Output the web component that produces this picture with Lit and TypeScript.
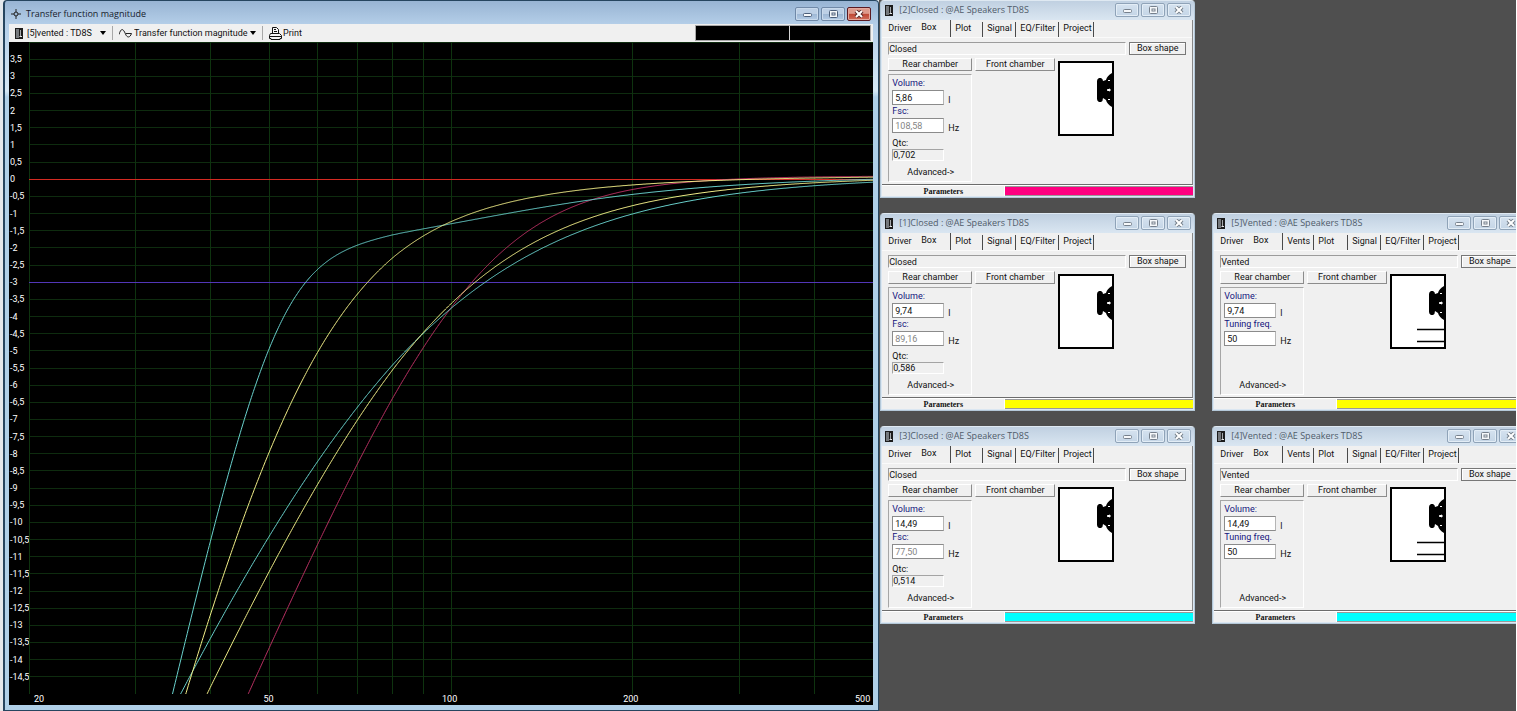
import { LitElement, html, svg, css, nothing } from "lit";
import { customElement, property } from "lit/decorators.js";

const UI = css`
  :host { box-sizing: border-box; font: 9px/12px Roboto, "Liberation Sans", sans-serif; color: #111; }
  *, *::before, *::after { box-sizing: border-box; }
  button, input, select, output { font: inherit; color: inherit; margin: 0; padding: 0; border-radius: 0; }
`;

const F_MIN = 20, F_MAX = 500, DB_MAX = 4, DB_MIN = -15;
const W = 843, H = 652;
const FS = 46.3, QTS = 0.307, VAS = 25.5, QL = 11.5;

const px = (f: number) => (Math.log(f / F_MIN) / Math.log(F_MAX / F_MIN)) * W;
const py = (db: number) => ((DB_MAX - db) / (DB_MAX - DB_MIN)) * H;
const lift = (f: number) => 0.1 * Math.min(1, (f / 80) ** 2);

function closedBox(f: number, fc: number, q: number) {
  const r2 = (f / fc) ** 2;
  return 10 * Math.log10((r2 * r2) / ((1 - r2) ** 2 + r2 / (q * q))) + lift(f);
}

function ventedBox(f: number, volume: number, tuning: number) {
  const h = tuning / FS, x = f / FS, alpha = VAS / volume;
  const re = x ** 4 - (1 + alpha + h * h + h / (QL * QTS)) * x * x + h * h;
  const im = -(x ** 3) * (1 / QTS + h / QL) + x * ((h * h) / QTS + h / QL);
  return 10 * Math.log10(x ** 8 / (re * re + im * im)) + lift(f);
}

function trace(fn: (f: number) => number) {
  const pts: string[] = [];
  for (let x = 0; x <= W; x += 1) {
    const db = fn(F_MIN * Math.pow(F_MAX / F_MIN, x / W));
    if (db >= DB_MIN - 0.1) pts.push(`${x},${py(db).toFixed(1)}`);
  }
  return pts.join(" ");
}

const CURVES = [
  { color: "#b83062", points: trace((f) => closedBox(f, 108.58, 0.702)) },
  { color: "#6ad2ce", points: trace((f) => closedBox(f, 77.5, 0.514)) },
  { color: "#f2ee88", points: trace((f) => closedBox(f, 89.16, 0.586)) },
  { color: "#6ad2ce", points: trace((f) => ventedBox(f, 14.49, 50)) },
  { color: "#f2ee88", points: trace((f) => ventedBox(f, 9.74, 50)) },
];

const speakerIcon = html`<svg width="8" height="11" viewBox="0 0 8 11" aria-hidden="true">
  <rect width="8" height="11" fill="#1c1c1c" /><rect x="1" y="1" width="3" height="9" fill="#74787c" />
  <path d="M5.500 2v6" stroke="#a4a8ab" /><path d="M4.500 8.500h2.500" stroke="#e4e6e8" />
</svg>`;

const caret = html`<svg width="6" height="4" viewBox="0 0 6 4" aria-hidden="true"><path d="M0 0h6L3 4z" fill="#000" /></svg>`;

@customElement("caption-buttons")
class CaptionButtons extends LitElement {
  @property({ type: Boolean }) active = false;
  static styles = [UI, css`
    :host { display: flex; gap: 2px; }
    button { width: 24px; height: 14px; border: 1px solid #8fa3b8; border-radius: 2px; box-shadow: inset 0 0 0 1px #e3edf6; display: grid; place-items: center;
      background: linear-gradient(#d5e2ef, #c4d5e6); }
    .blue { background: linear-gradient(#bdd0e6 50%, #9db7d4 50%, #b4cce6); border-color: #7089a8; box-shadow: inset 0 0 0 1px #c9daec; }
    .close { background: linear-gradient(#dd9a8c 45%, #bf4633 50%, #cf6e5c); border-color: #5b1a22; box-shadow: inset 0 0 0 1px #e5a99e; }
  `];
  render() {
    const a = this.active ? "blue" : "";
    const ink = this.active ? "#4c5f7a" : "#76808c";
    return html`
      <button class=${a} aria-label="Minimize"><svg width="9" height="8" viewBox="0 0 9 8"><rect x=".5" y="3.500" width="8" height="3" rx="1" fill="#f6f8fa" stroke=${ink} /></svg></button>
      <button class=${a} aria-label="Maximize"><svg width="9" height="8" viewBox="0 0 9 8"><rect x=".5" y=".5" width="8" height="7" rx="1" fill="#f6f8fa" stroke=${ink} /><rect x="3" y="3" width="3" height="2" fill="#fff" stroke=${ink} /></svg></button>
      <button class=${this.active ? "close" : ""} aria-label="Close"><svg width="10" height="8" viewBox="0 0 10 8"><path d="M2 1l6 6M8 1l-6 6" stroke=${this.active ? "#5b2a2a" : ink} stroke-width="4" /><path d="M2 1l6 6M8 1l-6 6" stroke="#fff" stroke-width="2" /></svg></button>`;
  }
}

@customElement("response-chart")
class ResponseChart extends LitElement {
  static styles = [UI, css`
    :host { flex: 1; min-height: 0; display: grid; grid-template: minmax(0, 1fr) 11px / 20px minmax(0, 1fr); background: #000; color: #fff; }
    .levels { display: flex; flex-direction: column; padding-left: 1px; }
    .levels span { flex: 1 1 0; min-height: 0; display: flex; align-items: center; white-space: nowrap; }
    .levels i { flex: .5 1 0; }
    svg { display: block; width: 100%; height: 100%; }
    polyline, line { fill: none; vector-effect: non-scaling-stroke; }
    line { shape-rendering: crispEdges; }
    .freqs { grid-column: 2; display: flex; line-height: 11px; }
    .freqs span { width: 0; display: flex; justify-content: center; }
    .freqs .first { justify-content: flex-start; text-indent: 5px; }
    .freqs .last { justify-content: flex-end; padding-right: 3px; }
  `];
  render() {
    const levels = Array.from({ length: 37 }, (_, i) => 3.5 - i * 0.5);
    const rows = Array.from({ length: 39 }, (_, i) => 4 - i * 0.5).filter((v) => v !== 0 && v !== -3);
    const cols = [20, 30, 40, 50, 60, 70, 80, 90, 100, 200, 300, 400, 500];
    const marks = [20, 50, 100, 200, 500];
    return html`
      <div class="levels"><i></i>${levels.map((v) => html`<span>${String(v).replace(".", ",")}</span>`)}<i></i></div>
      <svg viewBox="0 0 ${W} ${H}" preserveAspectRatio="none" role="img" aria-label="Transfer function magnitude">
        ${rows.map((v) => svg`<line x1="0" x2=${W} y1=${py(v)} y2=${py(v)} stroke="#0e2c0f" />`)}
        ${cols.map((f) => svg`<line y1="0" y2=${H} x1=${px(f)} x2=${px(f)} stroke="#0e330f" />`)}
        <line x1="0" x2=${W} y1=${py(0)} y2=${py(0)} stroke="#d42a22" />
        <line x1="0" x2=${W} y1=${py(-3)} y2=${py(-3)} stroke="#5236b8" />
        ${CURVES.map((c) => svg`<polyline points=${c.points} stroke=${c.color} />`)}
      </svg>
      <div class="freqs">${marks.map((f, i) => html`
        ${i ? html`<i style="flex-grow:${Math.log(f / marks[i - 1])}"></i>` : nothing}
        <span class=${i === 0 ? "first" : i === marks.length - 1 ? "last" : ""}>${f}</span>`)}</div>`;
  }
}

@customElement("chart-window")
class ChartWindow extends LitElement {
  static styles = [UI, css`
    :host { display: flex; flex-direction: column; border: 1px solid #26455f; border-left: 2px solid #26455f; border-radius: 4px 4px 0 0; padding: 1px 5px 5px 4px;
      background: linear-gradient(#98b4d3, #b5cfe9 24px, #d6e8f5 90px, #b0d0e8 96px); }
    .title { height: 22px; display: flex; align-items: center; gap: 5px; padding: 2px 2px 0 2px; font: 9px/12px "Open Sans", "Noto Sans", sans-serif; color: #16202c; }
    .title span { flex: 1; }
    .bar { height: 18px; display: flex; align-items: center; background: #f0f0f0; padding: 0 2px 0 6px; }
    .bar label { display: flex; align-items: center; gap: 2px; }
    .bar select { appearance: none; border: 0; background: none; height: 14px; }
    .source { width: 73px; padding-left: 2px; }
    .graph { width: 114px; }
    .sep { width: 1px; height: 14px; background: #a8a8a8; margin: 0 6px; }
    .print { border: 0; background: none; display: flex; align-items: center; gap: 1px; }
    .readouts { margin-left: auto; display: flex; gap: 1px; height: 16px; background: #d4d4d4; border: 1px solid #aaa; }
    .readouts output { background: #000; width: 93px; }
    .readouts output + output { width: 80px; }
  `];
  render() {
    return html`
      <div class="title">
        <svg width="10" height="10" viewBox="0 0 10 10" aria-hidden="true"><path d="M5 0v10M0 5h10" stroke="#222" /><circle cx="5" cy="5" r="2" fill="#9db8d4" stroke="#222" /></svg>
        <span>Transfer function magnitude</span><caption-buttons active></caption-buttons>
      </div>
      <div class="bar">
        <label>${speakerIcon}<select class="source" aria-label="Project"><option>[5]vented : TD8S</option></select>${caret}</label>
        <span class="sep"></span>
        <label><svg width="13" height="9" viewBox="0 0 13 9" aria-hidden="true"><path d="M0 5.500C2 -1 4 -1 6.500 5C8 9 11 9 12.500 4.500H7" fill="none" stroke="#222" /></svg>
          <select class="graph" aria-label="Graph"><option>Transfer function magnitude</option></select>${caret}</label>
        <span class="sep"></span>
        <button class="print"><svg width="13" height="13" viewBox="0 0 13 13" aria-hidden="true"><path d="M3.500 6.500v-6h4l2 2v4M1.500 6.500h9l2 2v3h-1.500v1h-9v-1h-1.500v-3zM0.500 9.500h12M5 2.500h2M5 4.500h3" fill="#f4f4f4" stroke="#111" /></svg>Print</button>
        <div class="readouts"><output></output><output></output></div>
      </div>
      <response-chart></response-chart>`;
  }
}

interface Project {
  id: number; type: "Closed" | "Vented"; volume: string; color: string;
  fsc?: string; qtc?: string; tuning?: string; col: number; row: number;
}

@customElement("box-window")
class BoxWindow extends LitElement {
  @property({ attribute: false }) project!: Project;
  static styles = [UI, css`
    :host { display: flex; flex-direction: column; height: 198px; border-radius: 4px 4px 0 0; padding: 0 1px 1px; background: linear-gradient(#c0d0e1, #dbe7f2 20px); border: 1px solid #b4c8d8; border-top-color: #dfe9f2; }
    .title { height: 19px; display: flex; align-items: center; gap: 6px; padding: 0 2px 1px 3px; font: 9px/12px "Open Sans", "Noto Sans", sans-serif; color: #505c6a; }
    .title span { flex: 1; white-space: nowrap; }
    .page { flex: 1; background: #f0f0f0; border-bottom: 1px solid #6c6c6c; border-right: 1px solid #888; }
    .tabs { display: flex; height: 17px; align-items: flex-end; }
    .tabs button { height: 15px; border: 0; border-right: 1px solid #4a4a4a; background: none; text-align: left; padding: 0 0 3px 4px; white-space: nowrap; }
    .tabs .driver { width: 34px; border: 0; padding-left: 6px; }
    .tabs .box { width: 35px; height: 17px; padding: 0 0 4px 5px; }
    .tabs .vents { width: 31px; } .tabs .plot { width: 32px; } .tabs .vents + .plot { width: 34px; } .tabs .signal { width: 33px; } .tabs .eq { width: 43px; } .tabs .project { width: 35px; }
    .body { padding: 4px 6px 0 6px; border-top: 1px solid #fafafa; display: flex; flex-direction: column; gap: 3px; }
    .top { display: flex; gap: 3px; }
    .kind { flex: 1; height: 13px; line-height: 12px; border: 1px solid; border-color: #9c9c9c #fff #fff #9c9c9c; }
    .btn { height: 13px; border: 1px solid; border-color: #fff #8c8c8c #8c8c8c #fff; background: #f0f0f0; line-height: 11px; }
    .shape { width: 57px; border: 1px solid #777; box-shadow: inset 1px 1px #fff; }
    .main { display: flex; gap: 3px; align-items: flex-start; }
    .rear { width: 84px; display: flex; flex-direction: column; gap: 3px; }
    .front { width: 80px; }
    .params { height: 108px; border: 1px solid; border-color: #a6a6a6 #fff #fff #a6a6a6; display: flex; flex-direction: column; padding: 2px 0 0 3px; }
    .field { display: grid; grid-template-columns: 52px auto; column-gap: 4px; }
    .field label { grid-column: 1 / 3; height: 13px; color: #13137c; line-height: 13px; }
    .field input { height: 15px; border: 1px solid #8b8b8b; border-right-color: #b5b5b5; background: #fff; padding-left: 2px; min-width: 0; width: 100%; }
    .field input:disabled { color: #858585; }
    .field span { line-height: 20px; height: 15px; }
    .result { display: grid; width: 52px; padding-top: 4px; }
    .result output { height: 12px; line-height: 11px; border: 1px solid; border-color: #a4a4a4 #fff #fff #a4a4a4; }
    .advanced { margin: auto 0 3px 15px; border: 0; background: none; align-self: flex-start; }
    .drawing { margin-top: 3px; }
    .foot { display: flex; height: 11px; padding-top: 1px; background: #fff; }
    .foot button { width: 122px; border: 0; background: #f0f0f0; font: bold 8px/9px "Liberation Serif", serif; }
    .swatch { flex: 1; margin-left: 1px; border: solid #999; border-width: 1px 0; }
  `];
  render() {
    const p = this.project;
    const vented = p.type === "Vented";
    return html`
      <div class="title">${speakerIcon}<span>[${p.id}]${p.type} : @AE Speakers TD8S</span><caption-buttons></caption-buttons></div>
      <div class="page">
        <div class="tabs" role="tablist">
          <button class="driver" role="tab">Driver</button><button class="box" role="tab" aria-selected="true">Box</button>
          ${vented ? html`<button class="vents" role="tab">Vents</button>` : nothing}
          <button class="plot" role="tab">Plot</button><button class="signal" role="tab">Signal</button><button class="eq" role="tab">EQ/Filter</button><button class="project" role="tab">Project</button>
        </div>
        <div class="body">
          <div class="top"><div class="kind">${p.type}</div><button class="btn shape">Box shape</button></div>
          <div class="main">
            <div class="rear">
              <button class="btn">Rear chamber</button>
              <div class="params">
                <div class="field"><label for="vol">Volume:</label><input id="vol" .value=${p.volume} /><span>l</span></div>
                ${vented
                  ? html`<div class="field"><label for="tune">Tuning freq.</label><input id="tune" .value=${p.tuning!} /><span>Hz</span></div>`
                  : html`<div class="field"><label for="fsc">Fsc:</label><input id="fsc" disabled .value=${p.fsc!} /><span>Hz</span></div>
                    <div class="result"><label for="qtc">Qtc:</label><output id="qtc">${p.qtc}</output></div>`}
                <button class="advanced">Advanced-&gt;</button>
              </div>
            </div>
            <button class="btn front">Front chamber</button>
            <svg class="drawing" width="56" height="75" viewBox="0 0 56 75" aria-hidden="true">
              <rect x="1" y="1" width="54" height="73" fill="#fff" stroke="#000" stroke-width="2" />
              <path d="M41 17h2q2 1 2 3l3-1q1-4 6-7h1v34h-1q-5-3-6-7l-3-2q0 3-2 4h-2q-2-1-2-3V20q0-2 2-3z" />
              <path d="M50 19.500h2M49 29l3-1v2zM50 38.500h2" stroke="#fff" fill="#fff" />
              ${vented ? svg`<path d="M27 55.500h28M27 67.500h28" stroke="#000" stroke-width="1.500" />` : nothing}
            </svg>
          </div>
        </div>
      </div>
      <div class="foot"><button>Parameters</button><div class="swatch" style="background:${p.color}"></div></div>`;
  }
}

const PROJECTS: Project[] = [
  { id: 2, type: "Closed", volume: "5,86", fsc: "108,58", qtc: "0,702", color: "#ff0080", col: 1, row: 1 },
  { id: 1, type: "Closed", volume: "9,74", fsc: "89,16", qtc: "0,586", color: "#ffff00", col: 1, row: 2 },
  { id: 5, type: "Vented", volume: "9,74", tuning: "50", color: "#ffff00", col: 2, row: 2 },
  { id: 3, type: "Closed", volume: "14,49", fsc: "77,50", qtc: "0,514", color: "#00ffff", col: 1, row: 3 },
  { id: 4, type: "Vented", volume: "14,49", tuning: "50", color: "#00ffff", col: 2, row: 3 },
];

@customElement("app-root")
class AppRoot extends LitElement {
  static styles = [UI, css`
    :host { display: flex; height: 100vh; min-height: 640px; overflow: hidden; background: #4f4f4f; border-right: 1px solid #fff; }
    .plot { flex: 0 0 58%; padding-left: 3px; display: flex; background: #e4e8ec; }
    chart-window { flex: 1; min-width: 0; }
    .projects { flex: 1; min-width: 0; overflow: hidden; display: grid; padding-left: 1px; grid-template-columns: 315px 315px; grid-auto-rows: 198px; gap: 15px 17px; align-content: start; }
  `];
  render() {
    return html`
      <section class="plot"><chart-window></chart-window></section>
      <section class="projects">${PROJECTS.map((p) => html`<box-window .project=${p} style="grid-area:${p.row}/${p.col}"></box-window>`)}</section>`;
  }
}
